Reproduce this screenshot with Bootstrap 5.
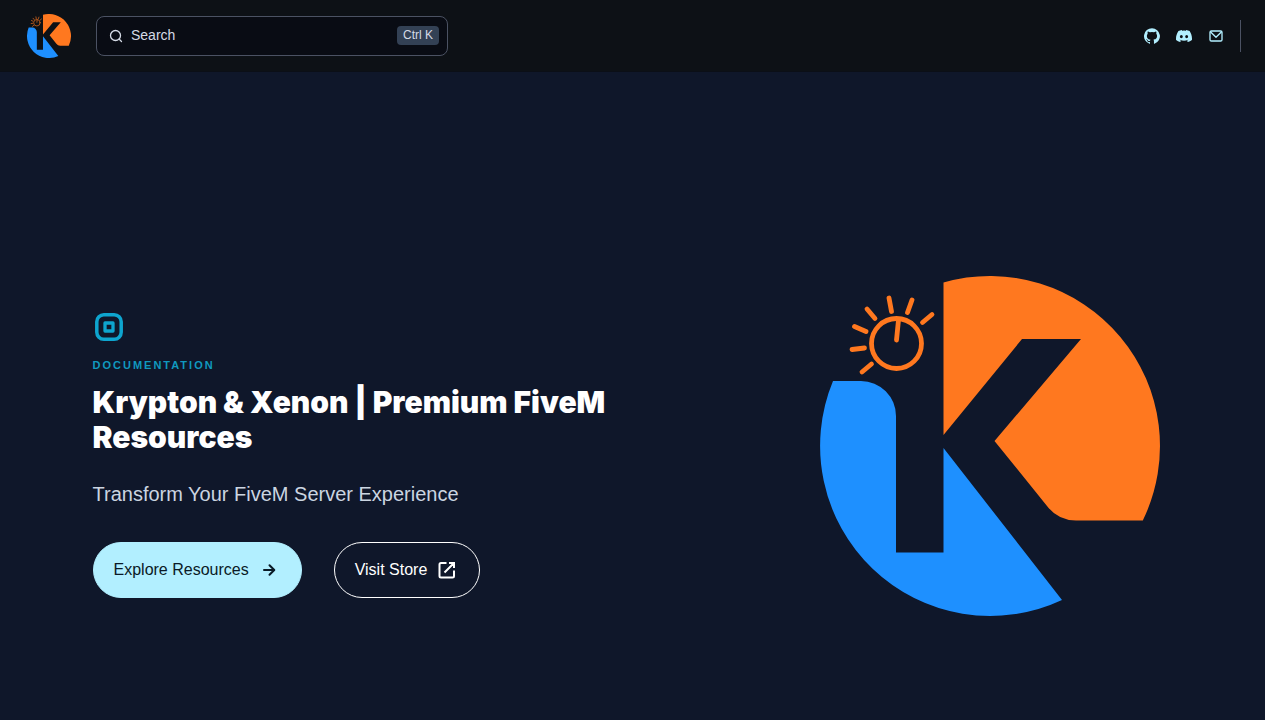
<!DOCTYPE html>
<html lang="en" data-bs-theme="dark">
<head>
<meta charset="utf-8">
<meta name="viewport" content="width=device-width, initial-scale=1">
<title>Krypton &amp; Xenon | Premium FiveM Resources</title>
<link rel="stylesheet" href="https://cdn.jsdelivr.net/npm/bootstrap@5.3.0/dist/css/bootstrap.min.css">
<style>
  body { background: #0f172a; color: #fff; font-family: "Liberation Sans", Arial, sans-serif; }
  .site-header { background: #0d1116; min-height: 72px; padding: 0 24px 0 27px; gap: 25px; border-bottom: 1px solid #0b0f17; }
  .search-btn { width: 352px; height: 40px; padding: 0 8px 0 12px; gap: 8px; font-size: 14px; color: #d5dbe6; background: #090c14; border: 1px solid #4b5263; border-radius: 8px; }
  .search-btn:hover { color: #fff; border-color: #fff; }
  .search-btn kbd { padding: 0 6px; font: 12px/19px "Liberation Sans", Arial, sans-serif; color: #d5dbe6; background: #334155; border-radius: 4px; }
  .socials { gap: 16px; padding-right: 16px; border-right: 1px solid #4b5263; height: 32px; }
  .socials a { color: #b2efff; line-height: 0; }
  .hero { max-width: 1080px; padding-top: 204px; padding-bottom: 48px; }
  .hero-copy { padding-top: 17px; }
  .eyebrow { margin: 14px 0 12px; font-size: 11px; line-height: 16px; font-weight: 700; letter-spacing: 2px; color: #1099bf; }
  .hero-title { margin: 0 0 25px; font-family: Inter, "Liberation Sans", sans-serif; font-size: 30px; line-height: 35px; font-weight: 900; }
  .tagline { margin: 0 0 34px; font-size: 20px; line-height: 28px; color: #cbd5e1; }
  .actions { gap: 32px; }
  .hero-btn { height: 56px; padding: 0 20px; gap: 8px; font-size: 16px; border-radius: 28px; }
  .btn-main, .btn-main:hover { color: #0a1a26; background: #b2efff; border-color: #b2efff; }
  .btn-line, .btn-line:hover { color: #fff; border-color: #fff; }
  .hero-logo { width: 340px; max-width: 100%; margin-right: 13px; }
</style>
</head>
<body>
<svg width="0" height="0" class="position-absolute" aria-hidden="true">
  <symbol id="logo" viewBox="0 0 340 340">
    <path fill="#ff781f" d="M123.500 6.500A170 170 0 0 1 322.800 244.500H256Q238 244.500 227 230L174.500 165L261 63H202L123.500 159Z"/>
    <path fill="#1e90ff" d="M13 105H41A35 35 0 0 1 76 140V276.500H123.500V172L242 324A170 170 0 0 1 13 105Z"/>
    <g fill="none" stroke="#ff781f" stroke-width="4.800" stroke-linecap="round">
      <circle cx="76.500" cy="67.500" r="25"/>
      <path d="M78.500 44 76.500 64M69 22l2.500 13.500M92 24l-4.500 12.500M112 38.500l-9.500 8M47 33l8 9.500M34.500 50.500l11.500 5M32 73.500l12.500-1.500M42 96l9.500-8"/>
    </g>
  </symbol>
</svg>

<header class="site-header d-flex align-items-center">
  <a href="#" aria-label="Home" class="lh-1"><svg width="44" height="44" class="d-block"><use href="#logo"/></svg></a>
  <button type="button" class="search-btn d-flex align-items-center">
    <svg width="14" height="14" viewBox="0 0 14 14" fill="none" stroke="currentColor" stroke-width="1.300" stroke-linecap="round" aria-hidden="true"><circle cx="6.500" cy="6.500" r="5"/><path d="m10.300 10.300 2.200 2.200"/></svg>
    <span>Search</span>
    <kbd class="ms-auto">Ctrl K</kbd>
  </button>
  <nav class="socials d-flex align-items-center ms-auto" aria-label="Social links">
    <a href="#" aria-label="GitHub"><svg width="16" height="16" viewBox="0 0 24 24" fill="currentColor"><path d="M12 .3a12 12 0 0 0-3.800 23.380c.6.120.83-.26.830-.57L9 21.070c-3.340.72-4.040-1.610-4.040-1.610-.55-1.390-1.340-1.760-1.340-1.760-1.080-.74.090-.73.090-.73 1.200.09 1.830 1.240 1.830 1.240 1.080 1.830 2.810 1.300 3.500 1 .1-.78.420-1.310.760-1.610-2.670-.3-5.470-1.330-5.470-5.930 0-1.310.470-2.380 1.240-3.220-.14-.3-.54-1.520.1-3.180 0 0 1-.32 3.300 1.230a11.500 11.500 0 0 1 6 0c2.280-1.550 3.290-1.230 3.290-1.230.64 1.660.240 2.880.120 3.180a4.650 4.650 0 0 1 1.230 3.220c0 4.610-2.800 5.630-5.480 5.920.42.360.810 1.100.810 2.220l-.01 3.290c0 .31.200.690.820.570A12 12 0 0 0 12 .3Z"/></svg></a>
    <a href="#" aria-label="Discord"><svg width="16" height="16" viewBox="0 0 24 24" fill="currentColor"><path d="M20.320 4.370a19.800 19.800 0 0 0-4.890-1.520.07.07 0 0 0-.08.040c-.21.380-.44.870-.6 1.250a18.300 18.300 0 0 0-5.500 0c-.16-.39-.4-.87-.61-1.250a.08.08 0 0 0-.08-.04 19.700 19.700 0 0 0-4.880 1.520C.53 9.050-.32 13.580.1 18.060a.08.08 0 0 0 .03.060 19.900 19.900 0 0 0 6 3.030.08.08 0 0 0 .08-.03c.46-.63.870-1.300 1.220-1.990a.08.08 0 0 0-.04-.11 13 13 0 0 1-1.870-.89.08.08 0 0 1 0-.13l.36-.29a.07.07 0 0 1 .08-.01c3.930 1.790 8.180 1.790 12.060 0a.07.07 0 0 1 .08.010l.37.290a.08.08 0 0 1 0 .13c-.6.350-1.220.640-1.870.890a.08.08 0 0 0-.04.110c.36.700.770 1.360 1.220 1.990a.08.08 0 0 0 .08.030 19.800 19.800 0 0 0 6-3.030.08.08 0 0 0 .04-.06c.5-5.170-.84-9.670-3.550-13.660ZM8.020 15.330c-1.180 0-2.160-1.080-2.160-2.420s.96-2.420 2.160-2.420c1.210 0 2.180 1.100 2.160 2.420 0 1.340-.96 2.420-2.160 2.420Zm7.970 0c-1.180 0-2.150-1.080-2.150-2.420s.95-2.420 2.150-2.420c1.220 0 2.180 1.100 2.160 2.420 0 1.340-.94 2.420-2.160 2.420Z"/></svg></a>
    <a href="#" aria-label="Email"><svg width="16" height="16" viewBox="0 0 24 24" fill="none" stroke="currentColor" stroke-width="2" stroke-linejoin="round" stroke-linecap="round"><rect x="3" y="4.500" width="18" height="15" rx="2"/><path d="m4 6 8 8 8-8"/></svg></a>
  </nav>
</header>

<main class="hero container-fluid px-0 d-flex flex-wrap flex-lg-nowrap align-items-center justify-content-between">
  <section class="hero-copy col-12 col-lg-6">
    <svg class="d-block" width="32" height="32" viewBox="0 0 32 32" fill="none" stroke="#0ea5cf" aria-hidden="true"><rect x="3.800" y="3.800" width="24.400" height="24.400" rx="7" stroke-width="3.500"/><rect x="12" y="12" width="8" height="8" stroke-width="3.300" stroke-linejoin="round"/></svg>
    <p class="eyebrow">DOCUMENTATION</p>
    <h1 class="hero-title">Krypton &amp; Xenon | Premium FiveM Resources</h1>
    <p class="tagline">Transform Your FiveM Server Experience</p>
    <div class="actions d-flex flex-wrap">
      <a href="#" class="btn btn-main hero-btn d-inline-flex align-items-center">Explore Resources
        <svg width="24" height="24" viewBox="0 0 24 24" fill="none" stroke="currentColor" stroke-width="2" stroke-linecap="round" stroke-linejoin="round" aria-hidden="true"><path d="M7 12h10M12.500 7.200l4.800 4.800-4.800 4.800"/></svg></a>
      <a href="#" class="btn btn-line hero-btn d-inline-flex align-items-center">Visit Store
        <svg width="24" height="24" viewBox="0 0 24 24" fill="none" stroke="currentColor" stroke-width="2" aria-hidden="true"><path d="M11.500 5H6a1.500 1.500 0 0 0-1.500 1.500v11.500a1.500 1.500 0 0 0 1.500 1.500h11.500a1.500 1.500 0 0 0 1.500-1.500v-5.500M14 5h5v5M19 5 9.500 14.500"/></svg></a>
    </div>
  </section>
  <svg class="hero-logo flex-shrink-0" viewBox="0 0 340 340" role="img" aria-label="Krypton and Xenon logo"><use href="#logo"/></svg>
</main>
<script src="https://cdn.jsdelivr.net/npm/bootstrap@5.3.0/dist/js/bootstrap.bundle.min.js"></script>
</body>
</html>
